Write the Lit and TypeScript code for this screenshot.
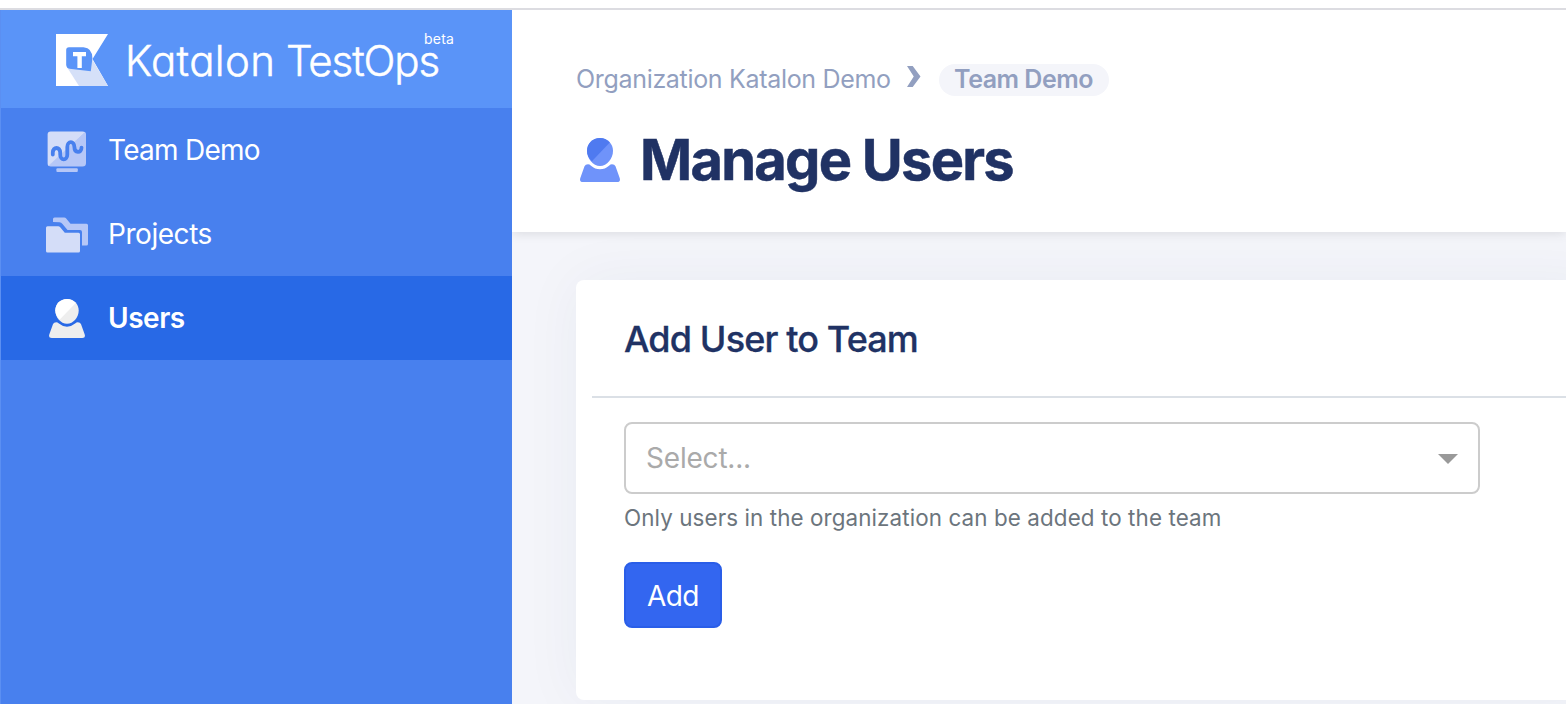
import { LitElement, html, css } from "lit";
import { customElement } from "lit/decorators.js";

const logo = html`<svg class="logo" viewBox="0 0 52 52" width="52" height="52">
  <path fill="#fff" d="M0 0H52L36.5 25L52 52H0Z" />
  <path fill="#d5e0f8" d="M11.5 34L36.5 26L52 52H23Z" />
  <path fill="#5a94f8" d="M13 13.2H27.5Q36.6 14 36.4 24.5L34.8 37.2L13.5 34.8Q10.2 34 10.2 30.5V16Q10.2 13.2 13 13.2Z" />
  <path fill="#fff" d="M17 18H30V22.2H25.8V34H21.4V22.2H17Z" />
</svg>`;

const icons = {
  team: html`<svg viewBox="0 0 44 44" width="44" height="44">
    <path fill="#b6c7f7" d="M40 4V33Q40 36.5 36.5 36.5H4.8Q3.4 36.5 2.4 35.6L39 2Q40 3 40 4Z" />
    <path fill="#d4ddf8" d="M4.7 1.6H36.5Q38.2 1.6 39.1 2.3L2.4 35.9Q1.6 35 1.6 33V4.8Q1.6 1.6 4.7 1.6Z" />
    <rect x="10.4" y="38.3" width="21.4" height="3.7" rx="1" fill="#b6c7f7" />
    <path fill="none" stroke="#4880ee" stroke-width="3.8" stroke-linecap="round"
      d="M6.8 24.5V22.5C6.8 16.5 14.2 16.5 14.2 22.5V24.5C14.2 31 21.3 31 21.3 24.5V17C21.3 10.6 28.4 10.6 28.4 17C28.4 23.4 35.5 23.4 35.5 17.6" />
  </svg>`,
  projects: html`<svg viewBox="0 0 44 44" width="44" height="44">
    <path fill="#b6c7f7" d="M7 8V5Q7 3.5 8.5 3.5H18.2Q19.4 3.5 20.2 4.5L24.5 9.7H40.5Q42 9.7 42 11.2V30Q42 31.5 40.5 31.5H36V18Q36 16 34 16H21.5L16.5 10Q15.3 8.2 13.5 8.2Z" />
    <path fill="#d4ddf8" d="M1.5 12.2H12.2Q13.4 12.2 14.2 13.2L18.8 18.8H32.5Q34 18.8 34 20.3V37Q34 38.5 32.5 38.5H1.5Q0 38.5 0 37V13.7Q0 12.2 1.5 12.2Z" />
  </svg>`,
};

const userIcon = (top: string, bottom: string, width: number, height: number) => html`
  <svg viewBox="0 0 40 44" width=${width} height=${height} preserveAspectRatio="none">
    <path fill=${bottom} d="M20 0C27.5 0 33 5.6 33 13C33 20.5 27 28 20 28C13 28 7 20.5 7 13C7 5.6 12.5 0 20 0Z" />
    <path fill=${top} d="M20 0C24 0 27.5 1.8 29.8 4.6L11.9 23.2C8.9 20.5 7 16.7 7 13C7 5.6 12.5 0 20 0Z" />
    <path fill=${bottom} d="M8 26.3Q9.5 26.3 11 27.7Q15 31.2 20 31.2Q25 31.2 29 27.7Q30.5 26.3 32 26.3Q34.6 26.3 35.5 28.2L39.6 39.8Q41 44 37 44H3Q-1 44 .4 39.8L4.5 28.2Q5.4 26.3 8 26.3Z" />
  </svg>`;

@customElement("app-sidebar")
class AppSidebar extends LitElement {
  static styles = css`
    :host {
      display: flex;
      flex-direction: column;
      flex: none;
      box-sizing: border-box;
      width: 512px;
      background: #4880ee;
      border-left: 1px solid #5b8ff2;
      color: #fff;
    }
    .brand {
      display: flex;
      height: 98px;
      box-sizing: border-box;
      padding: 24px 0 0 55px;
      background: #5a94f8;
    }
    .name {
      display: flex;
      width: 316px;
      margin-left: 17px;
      font-size: 42px;
      line-height: 54px;
      font-weight: 300;
      white-space: nowrap;
      -webkit-text-stroke: 0.5px #fff;
      font-feature-settings: "cv11";
    }
    .first {
      width: 161px;
      letter-spacing: 0.4px;
    }
    .second {
      letter-spacing: -1.1px;
    }
    .beta {
      margin: -4px 0 0 -17px;
      font-size: 14px;
      line-height: 17px;
      letter-spacing: 0.2px;
    }
    .item {
      display: flex;
      align-items: center;
      height: 84px;
      padding-left: 45px;
      font-size: 28px;
    }
    .glyph {
      width: 44px;
      display: flex;
      padding-top: 4px;
    }
    .user {
      padding-left: 3px;
      width: 41px;
      padding-top: 1px;
    }
    .label {
      margin-left: 18px;
      letter-spacing: -0.45px;
    }
    .team {
      letter-spacing: -0.74px;
    }
    .active {
      background: #2869e6;
      font-weight: 600;
    }
  `;
  render() {
    return html`
      <div class="brand">
        ${logo}
        <div class="name"><span class="first">Katalon</span><span class="second">TestOps</span></div>
        <span class="beta">beta</span>
      </div>
      <div class="item"><span class="glyph">${icons.team}</span><span class="label team">Team Demo</span></div>
      <div class="item"><span class="glyph">${icons.projects}</span><span class="label">Projects</span></div>
      <div class="item active"><span class="glyph user">${userIcon("#fff", "#eee", 36, 39)}</span><span class="label">Users</span></div>
    `;
  }
}

@customElement("app-root")
class AppRoot extends LitElement {
  static styles = css`
    :host {
      display: flex;
      flex-direction: column;
      height: 704px;
      overflow: hidden;
      background: #fff;
      font-family: Inter, "Liberation Sans", sans-serif;
    }
    .topline {
      flex: none;
      height: 8px;
      border-bottom: 2px solid #dcdce1;
    }
    .shell {
      display: flex;
      flex: 1;
      min-height: 0;
    }
    main {
      flex: 1;
      min-width: 0;
      background: #f4f5fa;
      overflow: hidden;
    }
    header {
      position: relative;
      box-sizing: border-box;
      height: 222px;
      padding: 54px 0 0 64px;
      background: #fff;
      box-shadow: 0 2px 10px rgba(0, 0, 0, 0.1);
    }
    .crumbs {
      display: flex;
      align-items: center;
      height: 32px;
      font-size: 25px;
      color: #929fc0;
      white-space: nowrap;
    }
    .org {
      width: 314px;
      margin-top: -2px;
      letter-spacing: -0.32px;
    }
    .chevron {
      margin: -7px 18px 0 17px;
    }
    .pill {
      box-sizing: border-box;
      width: 170px;
      height: 32px;
      line-height: 30px;
      text-align: center;
      border-radius: 16px;
      background: #f4f5fa;
      font-weight: 600;
      letter-spacing: -0.5px;
    }
    .heading {
      display: flex;
      align-items: center;
      margin-top: 30px;
      padding-left: 4px;
      height: 68px;
    }
    h1 {
      margin: 0 0 0 20px;
      font-size: 56px;
      line-height: 68px;
      font-weight: 700;
      letter-spacing: -1.75px;
      -webkit-text-stroke: 0.5px #203264;
      color: #203264;
      white-space: nowrap;
    }
    .card {
      box-sizing: border-box;
      height: 420px;
      margin: 48px -40px 0 64px;
      border-radius: 8px;
      background: #fff;
      box-shadow: 0 0 60px rgba(40, 50, 90, 0.05);
      padding: 35px 0 0 16px;
    }
    h2 {
      margin: 0;
      padding: 0 0 33px 32px;
      border-bottom: 2px solid #dbe0e6;
      font-size: 36px;
      line-height: 48px;
      font-weight: 500;
      letter-spacing: -0.87px;
      -webkit-text-stroke: 0.3px #203264;
      color: #203264;
    }
    .form {
      padding: 24px 0 0 32px;
    }
    .select {
      display: flex;
      align-items: center;
      justify-content: space-between;
      box-sizing: border-box;
      width: 856px;
      height: 72px;
      padding: 0 20px;
      border: 2px solid #ccc;
      border-radius: 8px;
      font-size: 28px;
      letter-spacing: -0.2px;
      color: #aaa;
    }
    .caret {
      margin-top: 2px;
    }
    .help {
      margin-top: 8px;
      font-size: 22.4px;
      line-height: 32px;
      letter-spacing: 0.1px;
      color: #6c757d;
      white-space: nowrap;
    }
    button {
      display: block;
      box-sizing: border-box;
      width: 98px;
      height: 66px;
      margin-top: 28px;
      padding: 2px 0 0;
      border: 2px solid #2a5ee8;
      border-radius: 8px;
      background: #3366f0;
      color: #fff;
      font: 400 28px Inter, "Liberation Sans", sans-serif;
      letter-spacing: -0.6px;
    }
  `;
  render() {
    return html`
      <div class="topline"></div>
      <div class="shell">
        <app-sidebar></app-sidebar>
        <main>
          <header>
            <div class="crumbs">
              <span class="org">Organization Katalon Demo</span>
              <svg class="chevron" width="13.5" height="21" viewBox="0 0 13 21" preserveAspectRatio="none">
                <path fill="#929fc0" d="M0 0H5.5L13 10.5L5.5 21H0L6.5 10.5Z" />
              </svg>
              <span class="pill">Team Demo</span>
            </div>
            <div class="heading">${userIcon("#4f7af0", "#6f93fa", 40, 44)}<h1>Manage Users</h1></div>
          </header>
          <section class="card">
            <h2>Add User to Team</h2>
            <div class="form">
              <div class="select">
                <span>Select...</span>
                <svg class="caret" width="20" height="10" viewBox="0 0 20 10"><path fill="#999" d="M0 0H20L10 10Z" /></svg>
              </div>
              <div class="help">Only users in the organization can be added to the team</div>
              <button>Add</button>
            </div>
          </section>
        </main>
      </div>
    `;
  }
}
